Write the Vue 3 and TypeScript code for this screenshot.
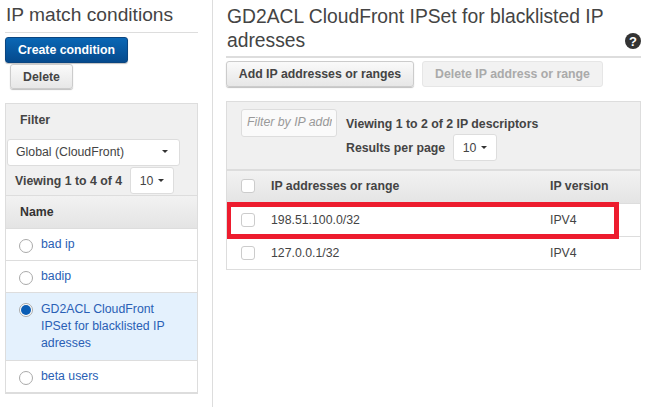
<script setup lang="ts">
const names = [
  { label: 'bad ip', selected: false },
  { label: 'badip', selected: false },
  { label: 'GD2ACL CloudFront IPSet for blacklisted IP adresses', selected: true },
  { label: 'beta users', selected: false },
]
const ips = ['198.51.100.0/32', '127.0.0.1/32']
</script>

<template>
  <div class="page">
    <aside class="left">
      <h2 class="ltitle">IP match conditions</h2>
      <button class="btn primary">Create condition</button>
      <button class="btn del">Delete</button>
      <section class="lpanel">
        <div class="filter">Filter</div>
        <div class="select"><span>Global (CloudFront)</span><i class="caret"></i></div>
        <div class="viewing">
          <b>Viewing 1 to 4 of 4</b>
          <div class="pager"><span>10</span><i class="caret"></i></div>
        </div>
        <div class="namehead">Name</div>
        <div v-for="n in names" :key="n.label" class="nrow" :class="{ sel: n.selected }">
          <span class="radio"><span v-if="n.selected" class="dot"></span></span>
          <a class="nlabel">{{ n.label }}</a>
        </div>
      </section>
    </aside>
    <main class="right">
      <div class="rhead">
        <h2 class="rtitle">GD2ACL CloudFront IPSet for blacklisted IP adresses</h2>
        <svg class="help" viewBox="0 0 16 16" width="16" height="16">
          <circle cx="8" cy="8" r="8" fill="#333" />
          <text x="8" y="12.6" text-anchor="middle" class="qm">?</text>
        </svg>
      </div>
      <div class="actions">
        <button class="btn add">Add IP addresses or ranges</button>
        <button class="btn disabled">Delete IP address or range</button>
      </div>
      <section class="rpanel">
        <div class="toolbar">
          <div class="search"><span class="ph">Filter by IP addr</span></div>
          <div class="tinfo">
            <b>Viewing 1 to 2 of 2 IP descriptors</b>
            <div class="perpage">
              <b>Results per page</b>
              <div class="pager"><span>10</span><i class="caret"></i></div>
            </div>
          </div>
        </div>
        <div class="trow thead">
          <span class="check"></span>
          <span class="cip">IP addresses or range</span>
          <span class="cver">IP version</span>
        </div>
        <div v-for="ip in ips" :key="ip" class="trow body">
          <span class="check"></span>
          <span class="cip">{{ ip }}</span>
          <span class="cver">IPV4</span>
        </div>
        <div class="highlight"></div>
      </section>
    </main>
  </div>
</template>

<style>
html, body { margin: 0; background: #fff; }
</style>

<style scoped>
.page {
  display: flex;
  width: 650px;
  height: 407px;
  overflow: hidden;
  font-family: "Liberation Sans", Arial, sans-serif;
  font-size: 12.3px;
  color: #444;
  box-sizing: border-box;
}
.left {
  width: 213px;
  box-sizing: border-box;
  padding-left: 5px;
  padding-right: 14px;
  border-right: 1px solid #ddd;
  flex: none;
  height: 100%;
}
.ltitle {
  margin: 0;
  height: 33px;
  box-sizing: border-box;
  padding: 3px 0 0 1px;
  font-weight: 400;
  font-size: 19.2px;
  line-height: 24px;
  color: #444;
  border-bottom: 1px solid #ddd;
}
.btn {
  display: block;
  box-sizing: border-box;
  font-family: inherit;
  font-size: 12.3px;
  font-weight: 700;
  border-radius: 3px;
  padding: 0;
  height: 26px;
  color: #444;
  background: linear-gradient(#fafafa, #e7e7e7);
  border: 1px solid #ccc;
  box-shadow: 0 1px 1px rgba(0, 0, 0, 0.25);
}
.primary {
  margin-top: 4px;
  width: 123px;
  color: #fff;
  background: linear-gradient(#0a67b5, #054a8d);
  border-color: #0a4580;
}
.del {
  margin: 1px 0 0 5px;
  width: 63px;
  height: 25px;
}
.lpanel {
  margin-top: 14px;
  width: 193px;
  box-sizing: border-box;
  background: #f0f0f0;
  border: 1px solid #ddd;
  border-bottom-width: 2px;
}
.filter {
  height: 35px;
  box-sizing: border-box;
  padding: 9px 0 0 14px;
  font-weight: 700;
  line-height: 14px;
}
.select {
  margin-left: 1px;
  width: 173px;
  height: 27px;
  box-sizing: border-box;
  background: #fff;
  border: 1px solid #ddd;
  border-radius: 3px;
  display: flex;
  align-items: center;
  justify-content: space-between;
  padding: 0 11px 2px 8px;
}
.caret {
  display: inline-block;
  width: 0;
  height: 0;
  border-left: 3px solid transparent;
  border-right: 3px solid transparent;
  border-top: 3px solid #333;
}
.viewing {
  display: flex;
  align-items: center;
  height: 29px;
  padding-left: 9px;
  gap: 8px;
}
.pager {
  width: 44px;
  height: 27px;
  box-sizing: border-box;
  background: #fff;
  border: 1px solid #ddd;
  border-radius: 3px;
  display: flex;
  align-items: center;
  justify-content: center;
  gap: 5px;
}
.namehead {
  height: 33px;
  box-sizing: border-box;
  padding: 9px 0 0 14px;
  line-height: 14px;
  font-weight: 700;
  background: linear-gradient(#f2f2f2, #e4e4e4);
  border-top: 1px solid #ddd;
  color: #333;
}
.nrow {
  display: flex;
  align-items: flex-start;
  gap: 8px;
  box-sizing: border-box;
  background: #fff;
  border-top: 1px solid #ddd;
  padding: 7px 26px 7px 13px;
  line-height: 17px;
}
.nrow.sel {
  background: #e4f1fd;
  padding-top: 8px;
  padding-bottom: 8px;
}
.radio {
  flex: none;
  box-sizing: border-box;
  width: 14px;
  height: 14px;
  margin-top: 3px;
  border-radius: 50%;
  border: 1px solid #aaa;
  background: #fff;
  display: flex;
  align-items: center;
  justify-content: center;
}
.sel .radio { margin-top: 2px; }
.dot {
  width: 10px;
  height: 10px;
  border-radius: 50%;
  background: #0a5db5;
}
.nlabel { color: #2a5fb5; }
.right {
  flex: 1;
  min-width: 0;
  padding: 0 9px 0 13px;
}
.rhead {
  display: flex;
  align-items: flex-end;
  justify-content: space-between;
  height: 58px;
  box-sizing: border-box;
  padding: 4px 0 3px;
  border-bottom: 2px solid #ddd;
}
.rtitle {
  margin: 0;
  flex: 1;
  padding-left: 1px;
  font-weight: 400;
  font-size: 19.3px;
  line-height: 24px;
  color: #444;
}
.help { flex: none; margin-bottom: 4px; }
.qm { font: 700 13px "Liberation Sans", Arial, sans-serif; fill: #fff; }
.actions {
  display: flex;
  gap: 8px;
  margin-top: 3px;
}
.add { width: 188px; }
.disabled {
  width: 181px;
  color: #aaa;
  background: #f2f2f2;
  border-color: #e6e6e6;
  box-shadow: none;
}
.rpanel {
  position: relative;
  margin-top: 14px;
  width: 415px;
  box-sizing: border-box;
  border: 1px solid #ddd;
}
.toolbar {
  display: flex;
  height: 67px;
  box-sizing: border-box;
  background: #f0f0f0;
  padding: 7px 0 0 14px;
  gap: 9px;
}
.search {
  flex: none;
  width: 96px;
  height: 28px;
  box-sizing: border-box;
  background: #fafafa;
  border: 1px solid #ddd;
  border-radius: 3px;
  padding: 0 5px;
  line-height: 25px;
  font-style: italic;
  color: #999;
}
.ph {
  display: block;
  width: 85px;
  overflow: hidden;
  white-space: nowrap;
}
.tinfo b { display: block; line-height: 14px; color: #444; }
.tinfo > b { margin-top: 8px; }
.perpage {
  display: flex;
  align-items: center;
  gap: 8px;
  margin-top: 3px;
}
.trow {
  display: flex;
  align-items: center;
  box-sizing: border-box;
  height: 33px;
  background: #fff;
  border-top: 1px solid #ddd;
}
.thead {
  background: linear-gradient(#f2f2f2, #e4e4e4);
  font-weight: 700;
  border-top-width: 2px;
  height: 34px;
  padding-bottom: 2px;
}
.check {
  flex: none;
  box-sizing: border-box;
  width: 14px;
  height: 14px;
  margin-left: 14px;
  border: 1px solid #ccc;
  border-radius: 3px;
  background: #fff;
}
.cip { width: 279px; margin-left: 16px; }
.cver { flex: 1; }
.highlight {
  position: absolute;
  left: 0;
  top: 100px;
  width: 392px;
  height: 37px;
  box-sizing: border-box;
  border: 5px solid #ed1c2e;
  border-left-width: 4px;
}
</style>
